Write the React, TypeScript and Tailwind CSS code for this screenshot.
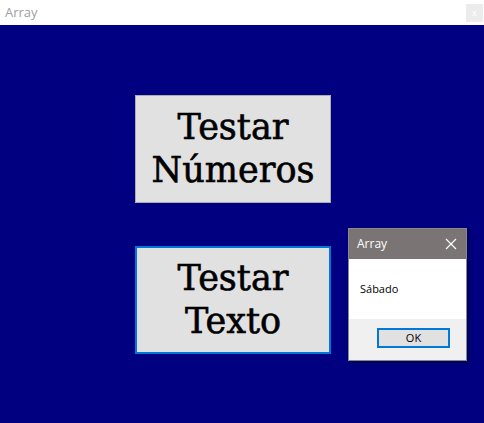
export default function App() {
  return (
    <div className="w-[484px] h-[423px] flex flex-col overflow-hidden">
      {/* window title bar */}
      <div className="h-[25px] bg-white flex items-center justify-between pl-[5px] pr-px">
        <span className="text-[13px] text-[#a0a0a0] font-['Open_Sans',sans-serif]">Array</span>
        <div className="w-[17px] h-[18px] bg-[#ececec] flex items-center justify-center text-[9px] text-white">x</div>
      </div>

      {/* form body */}
      <div className="flex-1 bg-[#000080] relative">
        <div className="pl-[135px] pt-[70px] flex flex-col gap-[43px]">
          <button className="w-[196px] h-[108px] bg-[#e1e1e1] border border-[#adadad] flex items-center justify-center font-['DejaVu_Serif',serif] text-[35px] leading-[43px] text-black [-webkit-text-stroke:0.6px_black]">
            Testar<br />Números
          </button>
          <button className="w-[196px] h-[108px] bg-[#e1e1e1] border-2 border-[#0078d7] flex items-center justify-center font-['DejaVu_Serif',serif] text-[35px] leading-[43px] text-black [-webkit-text-stroke:0.6px_black]">
            Testar<br />Texto
          </button>
        </div>

        {/* message box */}
        <div className="absolute left-[348px] top-[203px] w-[119px] h-[133px] border border-[#8a8a8a] shadow-[2px_2px_4px_rgba(0,0,0,0.35)] flex flex-col font-['Open_Sans',sans-serif]">
          <div className="h-[30px] bg-[#7a7574] flex items-center justify-between pl-[8px] pr-[9px]">
            <span className="text-[12px] text-white">Array</span>
            <svg width="12" height="12" viewBox="0 0 12 12" stroke="white" strokeWidth="1.2">
              <path d="M1 1 L11 11 M11 1 L1 11" />
            </svg>
          </div>
          <div className="h-[60px] bg-white flex items-center pl-[11px] text-[11px] text-black">Sábado</div>
          <div className="flex-1 bg-[#f0f0f0] flex justify-end pr-[16px] pt-[9px]">
            <div className="w-[73px] h-[20px] bg-[#e1e1e1] border-2 border-[#0078d7] flex items-center justify-center text-[11px] text-black">OK</div>
          </div>
        </div>
      </div>
    </div>
  );
}
